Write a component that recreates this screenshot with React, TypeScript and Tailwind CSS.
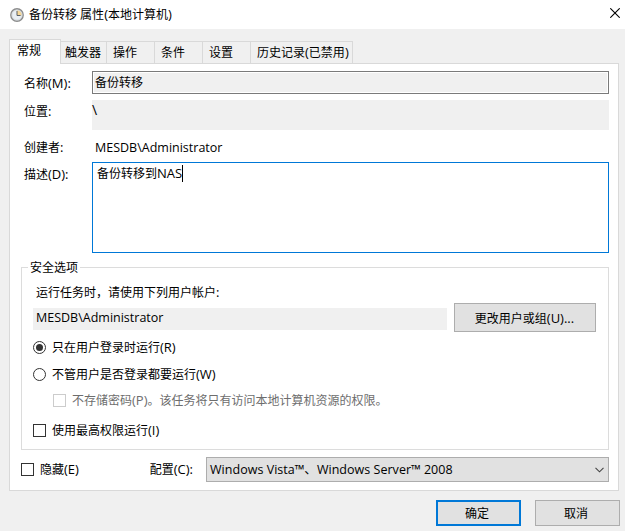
import type { ReactNode } from "react";
import clsx from "clsx";

const TABS = [
  { label: "触发器", width: "w-[46px]", pad: "pl-1" },
  { label: "操作", width: "w-12", pad: "pl-1.5" },
  { label: "条件", width: "w-12", pad: "pl-1.5" },
  { label: "设置", width: "w-12", pad: "pl-1.5" },
  { label: "历史记录(已禁用)", width: "w-[102px]", pad: "pl-1.5" },
];

function ClockIcon() {
  return (
    <svg width="14" height="14" viewBox="0 0 14 14" className="shrink-0">
      <circle cx="7" cy="7" r="6.2" fill="#e9eef3" stroke="#8c8c8c" strokeWidth="1.4" />
      <path d="M7 7.5V2.2a5 5 0 0 1 4.9 5.3z" fill="#f6d797" />
      <circle cx="7" cy="7" r="5" fill="none" stroke="#c3c9cf" strokeWidth="0.5" />
      <path d="M7 3v4.5h3.6" fill="none" stroke="#5a6068" strokeWidth="1" />
    </svg>
  );
}

function CloseIcon() {
  return (
    <svg width="10" height="10" viewBox="0 0 10 10">
      <path d="M0.3 0.3 9.7 9.7M9.7 0.3 0.3 9.7" stroke="#000" strokeWidth="1.1" />
    </svg>
  );
}

/** Latin letters and brackets run slightly larger than the 12px Chinese text */
function Text({ children }: { children: string }) {
  const parts = children.split(/([\x21-\x7e]+)/);
  return (
    <span>
      {parts.map((part, i) =>
        i % 2 === 1 ? (
          <span key={i} className="text-[13px] leading-none">
            {part}
          </span>
        ) : (
          part
        )
      )}
    </span>
  );
}

function Label({ children }: { children: string }) {
  return (
    <div className="w-[68px] shrink-0">
      <Text>{children}</Text>
    </div>
  );
}

function Radio({ checked }: { checked?: boolean }) {
  return (
    <span className="flex size-[13px] shrink-0 items-center justify-center rounded-full border border-[#333] bg-white">
      {checked && <span className="size-[7px] rounded-full bg-[#333]" />}
    </span>
  );
}

function Checkbox({ disabled }: { disabled?: boolean }) {
  return (
    <span
      className={clsx(
        "size-[13px] shrink-0 border bg-white",
        disabled ? "border-[#cccccc]" : "border-[#333]"
      )}
    />
  );
}

interface OptionProps {
  control: ReactNode;
  label: string;
  className?: string;
}

function Option({ control, label, className }: OptionProps) {
  return (
    <div className={clsx("flex h-4 items-center gap-1.5", className)}>
      {control}
      <div className="pt-0.5">
        <Text>{label}</Text>
      </div>
    </div>
  );
}

export default function App() {
  return (
    <div className="h-[531px] w-[625px] overflow-hidden bg-[#f0f0f0] font-['Open_Sans','Noto_Sans_CJK_SC',sans-serif] text-xs leading-4 whitespace-nowrap text-black">
      {/* Title bar */}
      <header className="flex h-[29px] items-center bg-white pr-[5px] pl-2.5">
        <ClockIcon />
        <div className="ml-[5px]">
          <Text>备份转移 属性(本地计算机)</Text>
        </div>
        <button className="mb-[3px] ml-auto">
          <CloseIcon />
        </button>
      </header>

      {/* Tabs */}
      <nav className="flex items-end pt-2.5 pl-[9px]">
        <div className="relative z-10 -mb-px h-[25px] w-[52px] border border-b-0 border-[#d9d9d9] bg-white pt-[3px] pl-[7px]">
          常规
        </div>
        {TABS.map((tab) => (
          <div
            key={tab.label}
            className={clsx("h-[22px] border-t border-r border-[#d9d9d9] pt-[3px]", tab.width, tab.pad)}
          >
            <Text>{tab.label}</Text>
          </div>
        ))}
      </nav>

      <main className="ml-[9px] h-[428px] w-[610px] border border-[#d9d9d9] bg-white pt-[7px] pr-[9px] pl-[11px]">
        <div className="flex h-[23px] pl-[3px]">
          <div className="pt-[5px]">
            <Label>名称(M):</Label>
          </div>
          <div className="h-full flex-1 border border-[#7a7a7a] bg-white p-px">
            <div className="h-full bg-[#f0f0f0] pt-0.5 pl-px">备份转移</div>
          </div>
        </div>
        <div className="mt-1.5 flex h-[30px] pl-[3px]">
          <div className="pt-1">
            <Label>位置:</Label>
          </div>
          <div className="ml-auto w-[517px] bg-[#f0f0f0] pt-0.5 text-sm leading-4">\</div>
        </div>
        <div className="flex h-8 items-center pt-1 pl-[3px]">
          <Label>创建者:</Label>
          <span className="pl-[3px] text-[12.5px]">MESDB\Administrator</span>
        </div>
        <div className="flex h-[91px] pl-[3px]">
          <div className="pt-[5px]">
            <Label>描述(D):</Label>
          </div>
          <div className="ml-auto flex w-[517px] border border-[#0078d7] pt-0.5 pl-1">
            <div className="pt-px">
              <Text>备份转移到NAS</Text>
            </div>
            <span className="h-[17px] w-px bg-black" />
          </div>
        </div>

        {/* Security options */}
        <section className="mt-3.5 h-[183px] border border-[#dcdcdc] pr-3 pl-[11px]">
          <div className="-mt-2 -ml-[5px] w-[52px] bg-white pl-0.5">安全选项</div>
          <div className="mt-[9px] pl-[3px]">
            <Text>运行任务时，请使用下列用户帐户:</Text>
          </div>
          <div className="mt-0.5 flex h-[29px] items-center">
            <div className="mt-[3px] h-[22px] w-[414px] bg-[#f0f0f0] pt-0.5 pl-[3px] text-[12.5px]">
              MESDB\Administrator
            </div>
            <button className="ml-[7px] h-[29px] w-[142px] border border-[#adadad] bg-[#e1e1e1] pt-0.5 pr-px">
              <Text>更改用户或组(U)...</Text>
            </button>
          </div>
          <Option className="mt-[7px]" control={<Radio checked />} label="只在用户登录时运行(R)" />
          <Option className="mt-[11px]" control={<Radio />} label="不管用户是否登录都要运行(W)" />
          <Option
            className="mt-2.5 pl-5 text-[#6d6d6d]"
            control={<Checkbox disabled />}
            label="不存储密码(P)。该任务将只有访问本地计算机资源的权限。"
          />
          <Option className="mt-3.5" control={<Checkbox />} label="使用最高权限运行(I)" />
        </section>

        <div className="mt-[7px] flex h-[25px] items-center">
          <Checkbox />
          <div className="ml-1.5">
            <Text>隐藏(E)</Text>
          </div>
          <div className="ml-auto">
            <Text>配置(C):</Text>
          </div>
          <div className="ml-[13px] flex h-[25px] w-[403px] items-center border border-[#adadad] bg-[#e1e1e1] pr-1 pl-[3px]">
            <span className="text-[12.5px] tracking-[0.03px]">Windows Vista™、Windows Server™ 2008</span>
            <svg width="9" height="6" viewBox="0 0 9 6" className="ml-auto">
              <path d="M0.5 0.8 4.5 4.8 8.5 0.8" fill="none" stroke="#444" strokeWidth="1.1" />
            </svg>
          </div>
        </div>
      </main>

      <footer className="mt-[9px] flex justify-end gap-3.5 pr-[5px]">
        <button className="h-[26px] w-[85px] border-2 border-[#0078d7] bg-[#e1e1e1] pr-[3px] pt-px">确定</button>
        <button className="h-[26px] w-[85px] border border-[#adadad] bg-[#e1e1e1] pr-[3px] pt-px">取消</button>
      </footer>
    </div>
  );
}
